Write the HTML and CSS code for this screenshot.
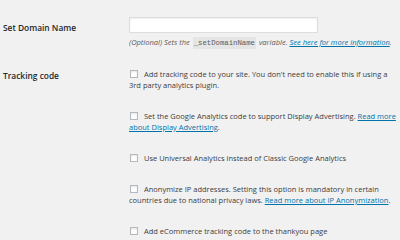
FILE: index.html
```
<!DOCTYPE html>
<html lang="en">
<head>
    <meta charset="UTF-8">
    <title>Google Analytics Settings</title>
    <link rel="stylesheet" href="styles.css">
</head>
<body>
    <div class="form-table">
        <!-- Dominio -->
        <div class="row">
            <div class="label">Set Domain Name</div>
            <div class="field">
                <input type="text" class="text-input">
                <p class="description">(Optional) Sets the <code>_setDomainName</code> variable. <a href="#">See here for more information</a>.</p>
            </div>
        </div>

        <!-- Opciones de seguimiento -->
        <div class="row tracking">
            <div class="label">Tracking code</div>
            <div class="field">
                <label class="option">
                    <input type="checkbox">
                    Add tracking code to your site. You don't need to enable this if using a 3rd party analytics plugin.
                </label>
                <label class="option">
                    <input type="checkbox">
                    Set the Google Analytics code to support Display Advertising. <a href="#">Read more about Display Advertising</a>.
                </label>
                <label class="option">
                    <input type="checkbox">
                    Use Universal Analytics instead of Classic Google Analytics
                </label>
                <label class="option">
                    <input type="checkbox">
                    Anonymize IP addresses. Setting this option is mandatory in certain countries due to national privacy laws. <a href="#">Read more about IP Anonymization</a>.
                </label>
                <label class="option">
                    <input type="checkbox">
                    Add eCommerce tracking code to the thankyou page
                </label>
            </div>
        </div>
    </div>
</body>
</html>
```

FILE: styles.css
```
* {
    margin: 0;
    padding: 0;
    box-sizing: border-box;
}

body {
    font-family: "Open Sans", "Liberation Sans", sans-serif;
    font-size: 7.5px;
    line-height: 11px;
    background: #f1f1f1;
    color: #3c3c3c;
    overflow: hidden;
}

.form-table {
    padding: 17px 0 0 3px;
}

.row {
    display: grid;
    grid-template-columns: 126px 268px;
}

.row.tracking {
    margin-top: 20px;
}

.label {
    font-size: 8.4px;
    font-weight: 600;
    color: #23282d;
    padding-top: 5px;
}

.tracking .label {
    padding-top: 1px;
}

.text-input {
    display: block;
    width: 189px;
    height: 16px;
    border: 1px solid #ddd;
    background: #fff;
    box-shadow: inset 0 1px 2px rgba(0, 0, 0, 0.07);
}

.description {
    margin-top: 4px;
    font-style: italic;
    color: #5c5c5c;
}

code {
    font-family: "Liberation Mono", monospace;
    font-size: 7.3px;
    font-style: normal;
    background: #e5e5e5;
    padding: 2px 1px;
    margin: 0 1px;
}

a {
    color: #0073aa;
}

.option {
    display: block;
    margin-bottom: 20px;
}

.option input {
    -webkit-appearance: none;
    appearance: none;
    width: 8px;
    height: 8px;
    margin: 0 4px 0 1px;
    border: 1px solid #b4b9be;
    background: #fff;
    vertical-align: -1px;
    box-shadow: inset 0 1px 2px rgba(0, 0, 0, 0.1);
}
```
